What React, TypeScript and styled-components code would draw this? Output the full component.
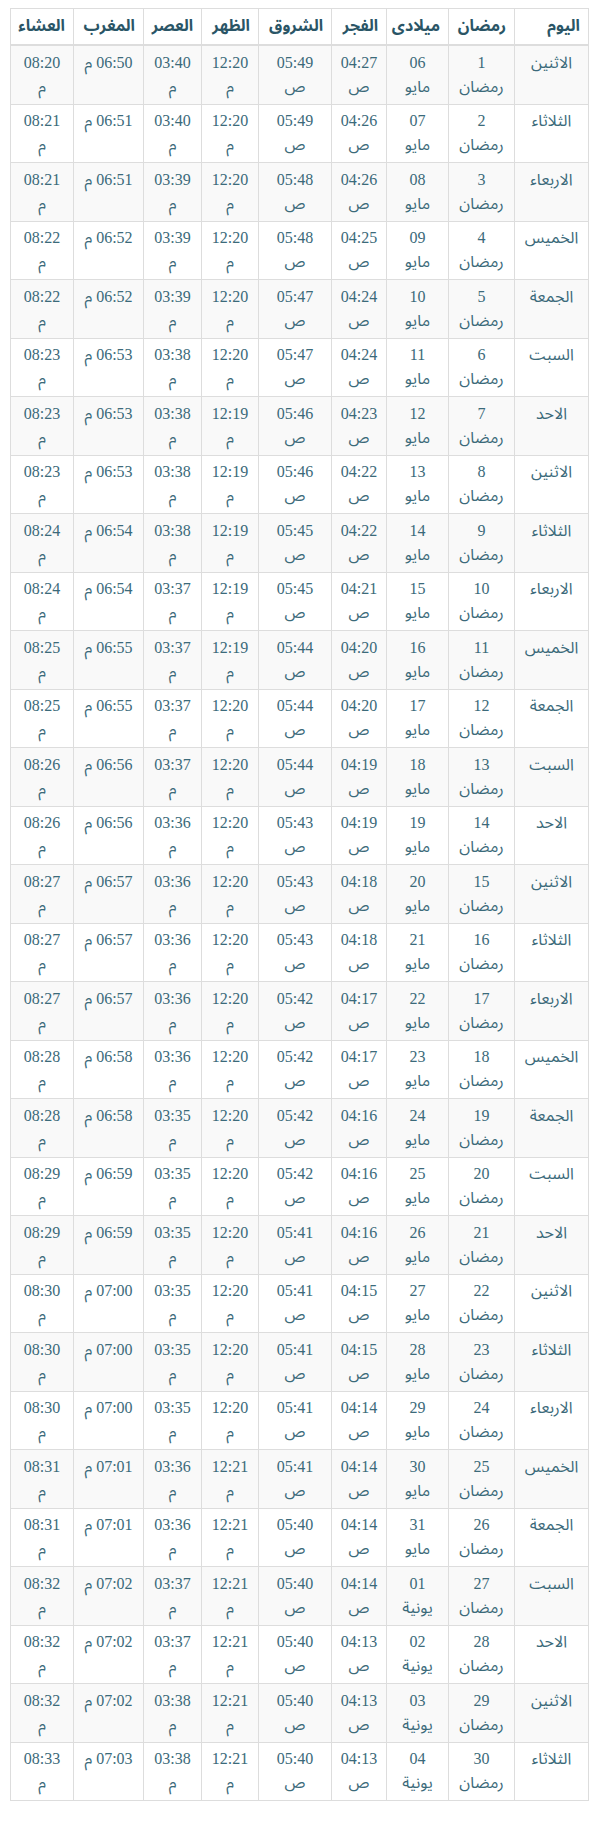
import React from 'react';
import styled, { createGlobalStyle } from 'styled-components';

const GlobalStyle = createGlobalStyle`
  html, body {
    margin: 0;
    padding: 0;
    background: #fff;
  }
  *, *::before, *::after {
    box-sizing: border-box;
  }
`;

interface Day {
  day: string;
  ramadan: number;
  date: string;
  month: string;
  fajr: string;
  shurooq: string;
  dhuhr: string;
  asr: string;
  maghrib: string;
  isha: string;
}

const raw: [string, string, string, string, string, string, string, string][] = [
  ['الاثنين', '06', '04:27', '05:49', '12:20', '03:40', '06:50', '08:20'],
  ['الثلاثاء', '07', '04:26', '05:49', '12:20', '03:40', '06:51', '08:21'],
  ['الاربعاء', '08', '04:26', '05:48', '12:20', '03:39', '06:51', '08:21'],
  ['الخميس', '09', '04:25', '05:48', '12:20', '03:39', '06:52', '08:22'],
  ['الجمعة', '10', '04:24', '05:47', '12:20', '03:39', '06:52', '08:22'],
  ['السبت', '11', '04:24', '05:47', '12:20', '03:38', '06:53', '08:23'],
  ['الاحد', '12', '04:23', '05:46', '12:19', '03:38', '06:53', '08:23'],
  ['الاثنين', '13', '04:22', '05:46', '12:19', '03:38', '06:53', '08:23'],
  ['الثلاثاء', '14', '04:22', '05:45', '12:19', '03:38', '06:54', '08:24'],
  ['الاربعاء', '15', '04:21', '05:45', '12:19', '03:37', '06:54', '08:24'],
  ['الخميس', '16', '04:20', '05:44', '12:19', '03:37', '06:55', '08:25'],
  ['الجمعة', '17', '04:20', '05:44', '12:20', '03:37', '06:55', '08:25'],
  ['السبت', '18', '04:19', '05:44', '12:20', '03:37', '06:56', '08:26'],
  ['الاحد', '19', '04:19', '05:43', '12:20', '03:36', '06:56', '08:26'],
  ['الاثنين', '20', '04:18', '05:43', '12:20', '03:36', '06:57', '08:27'],
  ['الثلاثاء', '21', '04:18', '05:43', '12:20', '03:36', '06:57', '08:27'],
  ['الاربعاء', '22', '04:17', '05:42', '12:20', '03:36', '06:57', '08:27'],
  ['الخميس', '23', '04:17', '05:42', '12:20', '03:36', '06:58', '08:28'],
  ['الجمعة', '24', '04:16', '05:42', '12:20', '03:35', '06:58', '08:28'],
  ['السبت', '25', '04:16', '05:42', '12:20', '03:35', '06:59', '08:29'],
  ['الاحد', '26', '04:16', '05:41', '12:20', '03:35', '06:59', '08:29'],
  ['الاثنين', '27', '04:15', '05:41', '12:20', '03:35', '07:00', '08:30'],
  ['الثلاثاء', '28', '04:15', '05:41', '12:20', '03:35', '07:00', '08:30'],
  ['الاربعاء', '29', '04:14', '05:41', '12:20', '03:35', '07:00', '08:30'],
  ['الخميس', '30', '04:14', '05:41', '12:21', '03:36', '07:01', '08:31'],
  ['الجمعة', '31', '04:14', '05:40', '12:21', '03:36', '07:01', '08:31'],
  ['السبت', '01', '04:14', '05:40', '12:21', '03:37', '07:02', '08:32'],
  ['الاحد', '02', '04:13', '05:40', '12:21', '03:37', '07:02', '08:32'],
  ['الاثنين', '03', '04:13', '05:40', '12:21', '03:38', '07:02', '08:32'],
  ['الثلاثاء', '04', '04:13', '05:40', '12:21', '03:38', '07:03', '08:33'],
];

const days: Day[] = raw.map((r, i) => ({
  day: r[0],
  ramadan: i + 1,
  date: r[1],
  month: i < 26 ? 'مايو' : 'يونية',
  fajr: r[2],
  shurooq: r[3],
  dhuhr: r[4],
  asr: r[5],
  maghrib: r[6],
  isha: r[7],
}));

const columns: { title: string; width: number }[] = [
  { title: 'اليوم', width: 74 },
  { title: 'رمضان', width: 66 },
  { title: 'ميلادى', width: 62 },
  { title: 'الفجر', width: 55 },
  { title: 'الشروق', width: 73 },
  { title: 'الظهر', width: 57 },
  { title: 'العصر', width: 58 },
  { title: 'المغرب', width: 70 },
  { title: 'العشاء', width: 63 },
];

const Page = styled.div`
  padding: 8px 11px 30px;
  direction: rtl;
`;

const Table = styled.table`
  width: 578px;
  border-collapse: collapse;
  border-spacing: 0;
  table-layout: fixed;
  border: 1px solid #ddd;
  font-family: 'Liberation Serif', 'Noto Sans Arabic', 'Noto Sans', serif;
  font-size: 16px;
  color: #3b6a7a;
`;

const HeadCell = styled.th<{ $w: number }>`
  width: ${(p) => p.$w}px;
  padding: 5px 8px 6px;
  line-height: 24px;
  text-align: right;
  font-weight: bold;
  color: #2a5566;
  border: 1px solid #ddd;
  border-bottom: 2px solid #ddd;
  vertical-align: bottom;
  white-space: nowrap;
`;

const Row = styled.tr<{ $odd: boolean }>`
  background: ${(p) => (p.$odd ? '#f9f9f9' : '#fff')};
`;

const Cell = styled.td<{ $side?: number }>`
  padding: 4.75px ${(p) => p.$side ?? 8}px;
  line-height: 24px;
  text-align: center;
  vertical-align: top;
  border: 1px solid #ddd;
`;

export default function App() {
  return (
    <>
      <GlobalStyle />
      <Page>
        <Table>
          <thead>
            <tr>
              {columns.map((c) => (
                <HeadCell key={c.title} $w={c.width}>
                  {c.title}
                </HeadCell>
              ))}
            </tr>
          </thead>
          <tbody>
            {days.map((d, i) => (
              <Row key={d.ramadan} $odd={i % 2 === 0}>
                <Cell>{d.day}</Cell>
                <Cell>{d.ramadan} رمضان</Cell>
                <Cell $side={10}>
                  {d.date} {d.month}
                </Cell>
                <Cell>{d.fajr} ص</Cell>
                <Cell>{d.shurooq} ص</Cell>
                <Cell>{d.dhuhr} م</Cell>
                <Cell>{d.asr} م</Cell>
                <Cell>{d.maghrib} م</Cell>
                <Cell>{d.isha} م</Cell>
              </Row>
            ))}
          </tbody>
        </Table>
      </Page>
    </>
  );
}
